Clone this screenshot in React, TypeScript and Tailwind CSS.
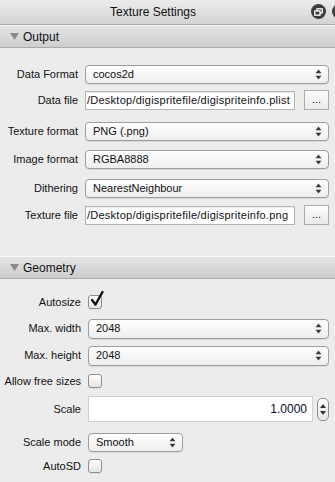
import React from "react";

function Arrows() {
  return (
    <svg width="7" height="11" viewBox="0 0 7 11" className="shrink-0">
      <path d="M3.5 0.5 L6.5 4.2 L0.5 4.2 Z" fill="#3a3a3a" />
      <path d="M3.5 10.5 L6.5 6.8 L0.5 6.8 Z" fill="#3a3a3a" />
    </svg>
  );
}

function Select({ value, className = "" }: { value: string; className?: string }) {
  return (
    <div
      className={`h-[19px] rounded-[4px] border border-[#9d9d9d] bg-gradient-to-b from-[#ffffff] to-[#eeeeee] shadow-[0_1px_0_rgba(0,0,0,0.08)] flex items-center justify-between pl-[7px] pr-[6px] ${className}`}
    >
      <span className="whitespace-nowrap">{value}</span>
      <Arrows />
    </div>
  );
}

function Checkbox({ checked = false }: { checked?: boolean }) {
  return (
    <div className="relative w-[14px] h-[14px] rounded-[3px] border border-[#8e8e8e] bg-gradient-to-b from-[#ffffff] to-[#e4e4e4] shadow-[0_1px_0_rgba(0,0,0,0.06)]">
      {checked && (
        <svg width="16" height="18" viewBox="0 0 16 18" className="absolute left-[0px] top-[-6px]">
          <path d="M3 10 L6.5 14.5 L13.5 2" stroke="#111" strokeWidth="2.4" fill="none" strokeLinecap="round" strokeLinejoin="round" />
        </svg>
      )}
    </div>
  );
}

function Header({ title }: { title: string }) {
  return (
    <div className="h-[23px] border-t border-t-[#f6f6f6] border-b border-b-[#a9a9a9] bg-gradient-to-b from-[#e4e4e4] to-[#cdcdcd] flex items-center pl-[10px] text-[12px] text-[#111]">
      <svg width="9" height="7" viewBox="0 0 9 7" className="mr-[4px]">
        <path d="M0 0 L9 0 L4.5 7 Z" fill="#8a8a8a" />
      </svg>
      <span>{title}</span>
    </div>
  );
}

function PathInput({ value }: { value: string }) {
  return (
    <div className="w-[210px] shrink-0 h-[19px] border border-[#b3b3b3] bg-white shadow-[inset_0_1px_1px_rgba(0,0,0,0.08)] flex items-center overflow-hidden pl-[1px]">
      <span className="whitespace-nowrap tracking-[0.25px]">{value}</span>
    </div>
  );
}

function DotsButton() {
  return (
    <div className="w-[25px] h-[20px] shrink-0 ml-[9px] border border-[#acacac] bg-gradient-to-b from-[#fdfdfd] to-[#e9e9e9] flex items-center justify-center text-[11px] leading-none pb-[1px]">
      ...
    </div>
  );
}

function OutRow({ label, children, mt }: { label: string; children: React.ReactNode; mt: string }) {
  return (
    <div className={`flex items-center ${mt}`}>
      <div className="w-[78px] shrink-0 text-right whitespace-nowrap">{label}</div>
      <div className="ml-[7px] flex-1 min-w-0 flex items-center">{children}</div>
    </div>
  );
}

function GeoRow({ label, children, mt }: { label: string; children: React.ReactNode; mt: string }) {
  return (
    <div className={`flex items-center ${mt}`}>
      <div className="w-[81px] shrink-0 text-right whitespace-nowrap">{label}</div>
      <div className="ml-[7px] flex-1 min-w-0 flex items-center">{children}</div>
    </div>
  );
}

export default function App() {
  return (
    <div className="w-[335px] h-[482px] bg-[#ececec] overflow-hidden text-[11px] text-[#111] font-['Liberation_Sans',Arial,sans-serif]">
      {/* Title bar */}
      <div className="relative h-[25px] border-b border-b-[#a8a8a8] bg-gradient-to-b from-[#ececec] to-[#d4d4d4] flex items-center justify-center text-[12px] text-[#111]">
        <span className="mr-[29px]">Texture Settings</span>
        <div className="absolute left-[311px] top-[4px] w-[15px] h-[15px] rounded-full bg-[#3e3e3e] flex items-center justify-center">
          <svg width="9" height="8" viewBox="0 0 9 8">
            <rect x="3" y="0.8" width="5.2" height="4.2" fill="none" stroke="#fff" strokeWidth="1.3" />
            <rect x="0.8" y="3" width="5.2" height="4.2" fill="#3e3e3e" stroke="#fff" strokeWidth="1.3" />
          </svg>
        </div>
        <div className="absolute left-[332px] top-[4px] w-[15px] h-[15px] rounded-full bg-[#3e3e3e]" />
      </div>

      <Header title="Output" />

      <div className="pr-[6px]">
        <OutRow label="Data Format" mt="mt-[17px]">
          <Select value="cocos2d" className="flex-1" />
        </OutRow>
        <OutRow label="Data file" mt="mt-[6px]">
          <PathInput value="/Desktop/digispritefile/digispriteinfo.plist" />
          <DotsButton />
        </OutRow>
        <OutRow label="Texture format" mt="mt-[12px]">
          <Select value="PNG (.png)" className="flex-1" />
        </OutRow>
        <OutRow label="Image format" mt="mt-[9px]">
          <Select value="RGBA8888" className="flex-1" />
        </OutRow>
        <OutRow label="Dithering" mt="mt-[10px]">
          <Select value="NearestNeighbour" className="flex-1" />
        </OutRow>
        <OutRow label="Texture file" mt="mt-[7px]">
          <PathInput value="/Desktop/digispritefile/digispriteinfo.png" />
          <DotsButton />
        </OutRow>
      </div>

      <div className="mt-[31px]">
        <Header title="Geometry" />
      </div>

      <div className="pr-[6px]">
        <GeoRow label="Autosize" mt="mt-[15px]">
          <Checkbox checked />
        </GeoRow>
        <GeoRow label="Max. width" mt="mt-[8px]">
          <Select value="2048" className="flex-1 h-[20px]" />
        </GeoRow>
        <GeoRow label="Max. height" mt="mt-[7px]">
          <Select value="2048" className="flex-1 h-[20px]" />
        </GeoRow>
        <GeoRow label="Allow free sizes" mt="mt-[7px]">
          <Checkbox />
        </GeoRow>
        <GeoRow label="Scale" mt="mt-[7px]">
          <div className="flex-1 h-[26px] border border-[#cfcfcf] bg-white flex items-center justify-end pr-[5px] text-[12px] text-[#0a0a30]">
            1.0000
          </div>
          <div className="ml-[4px] w-[12px] h-[23px] shrink-0 rounded-[5px] border border-[#8e8e8e] bg-gradient-to-b from-[#ffffff] to-[#e6e6e6] flex flex-col items-center justify-center gap-[3px]">
            <svg width="6" height="4" viewBox="0 0 6 4"><path d="M3 0 L6 4 L0 4 Z" fill="#333" /></svg>
            <svg width="6" height="4" viewBox="0 0 6 4"><path d="M3 4 L6 0 L0 0 Z" fill="#333" /></svg>
          </div>
        </GeoRow>
        <GeoRow label="Scale mode" mt="mt-[11px]">
          <Select value="Smooth" className="w-[95px]" />
        </GeoRow>
        <GeoRow label="AutoSD" mt="mt-[6px]">
          <Checkbox />
        </GeoRow>
      </div>
    </div>
  );
}
